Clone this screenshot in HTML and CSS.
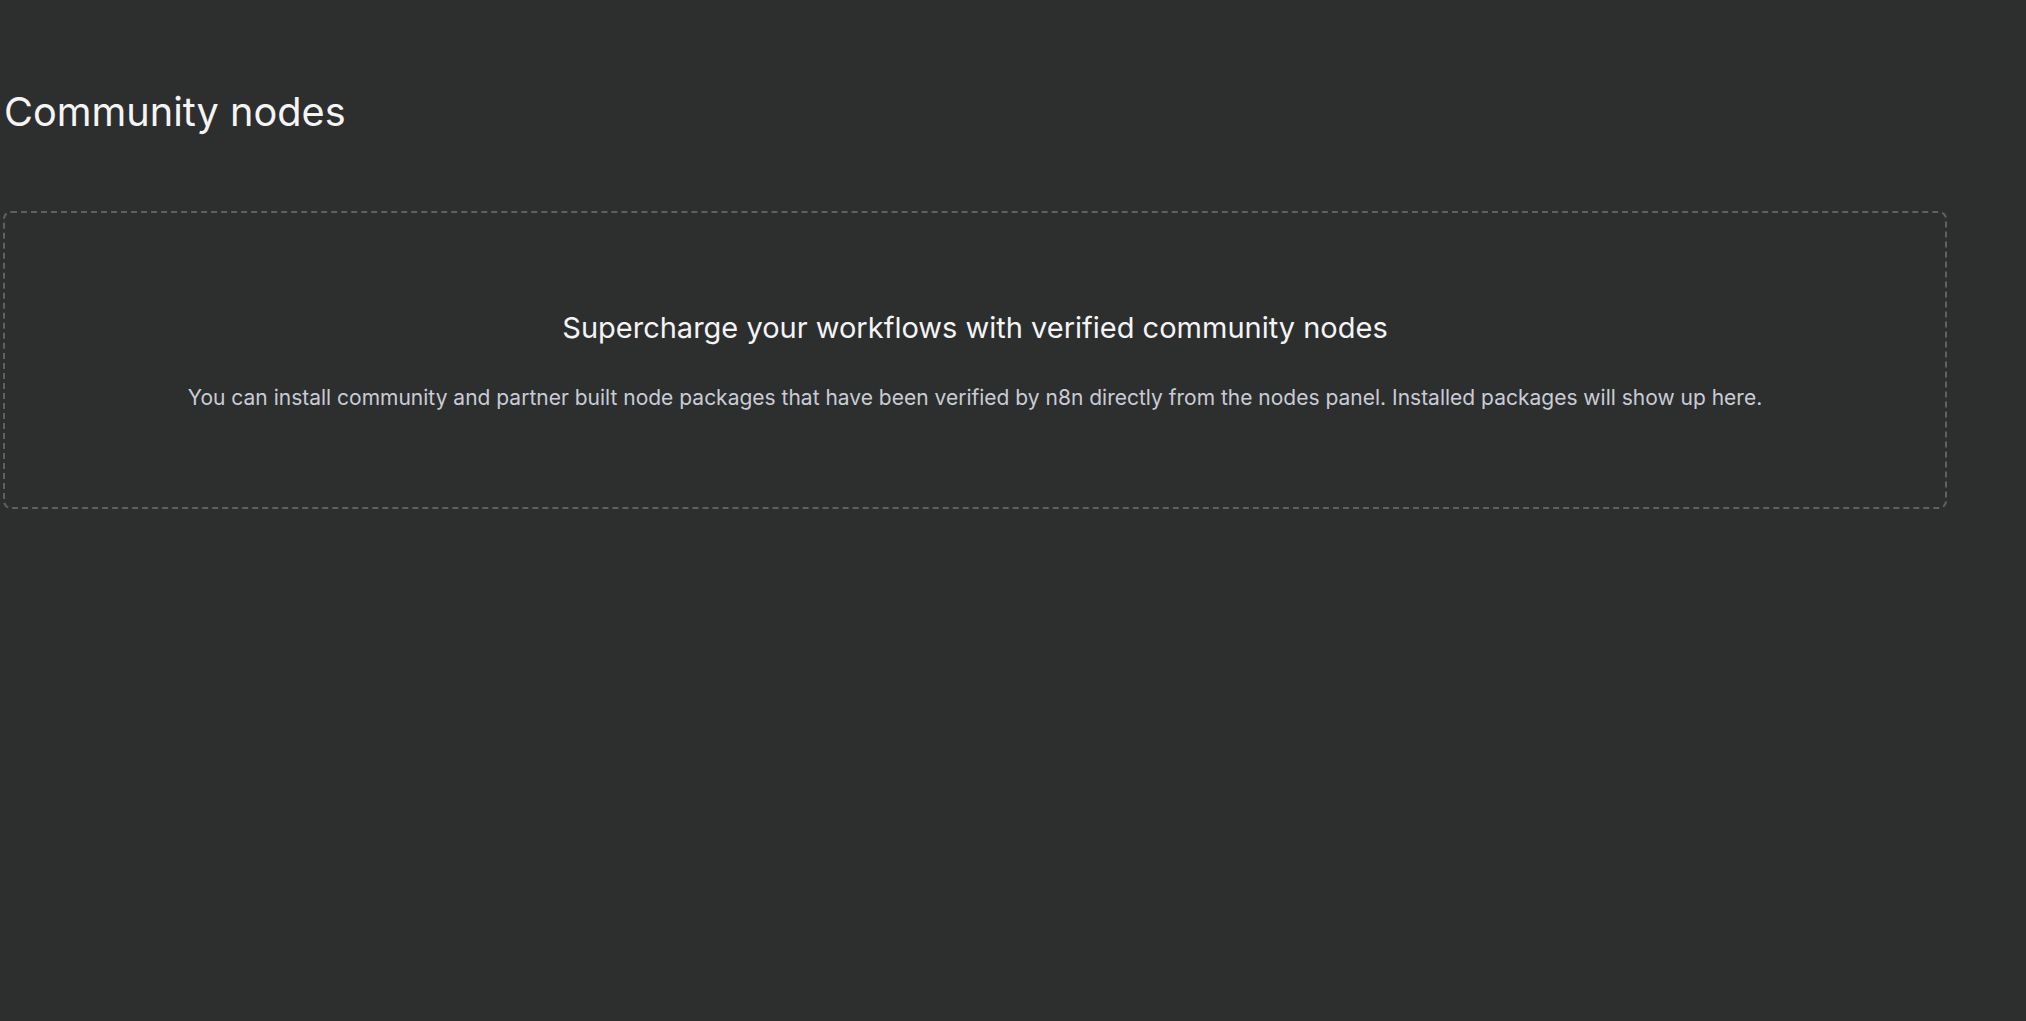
FILE: index.html
```html
<!DOCTYPE html>
<html>
<head>
<meta charset="utf-8">
<title>Community nodes</title>
<link rel="stylesheet" href="styles.css">
</head>
<body>
<div class="page">
	<h1 class="title">Community nodes</h1>
	<div class="empty">
		<h2 class="empty_head">Supercharge your workflows with verified community nodes</h2>
		<p class="empty_text">You can install community and partner built node packages that have been verified by n8n directly from the nodes panel. Installed packages will show up here.</p>
	</div>
</div>
</body>
</html>
```

FILE: styles.css
```css
*{margin:0;padding:0;box-sizing:border-box;}
html,body{height:100%;}
body{background:#2d2e2e;color:#f4f4f5;font-family:Inter,"Noto Sans",sans-serif;}
.page{width:1944px;margin-left:3px;padding-top:88px;}
.title{font-size:39.7px;font-weight:400;line-height:48px;padding-left:1px;}
.empty{margin-top:75px;height:298px;border:2px dashed #5f6060;border-radius:8px;display:flex;flex-direction:column;align-items:center;justify-content:center;gap:38px;padding-top:1px;}
.empty_head{font-size:29px;font-weight:400;line-height:36px;}
.empty_text{font-size:21px;line-height:28px;color:#c9ccd6;}
```
